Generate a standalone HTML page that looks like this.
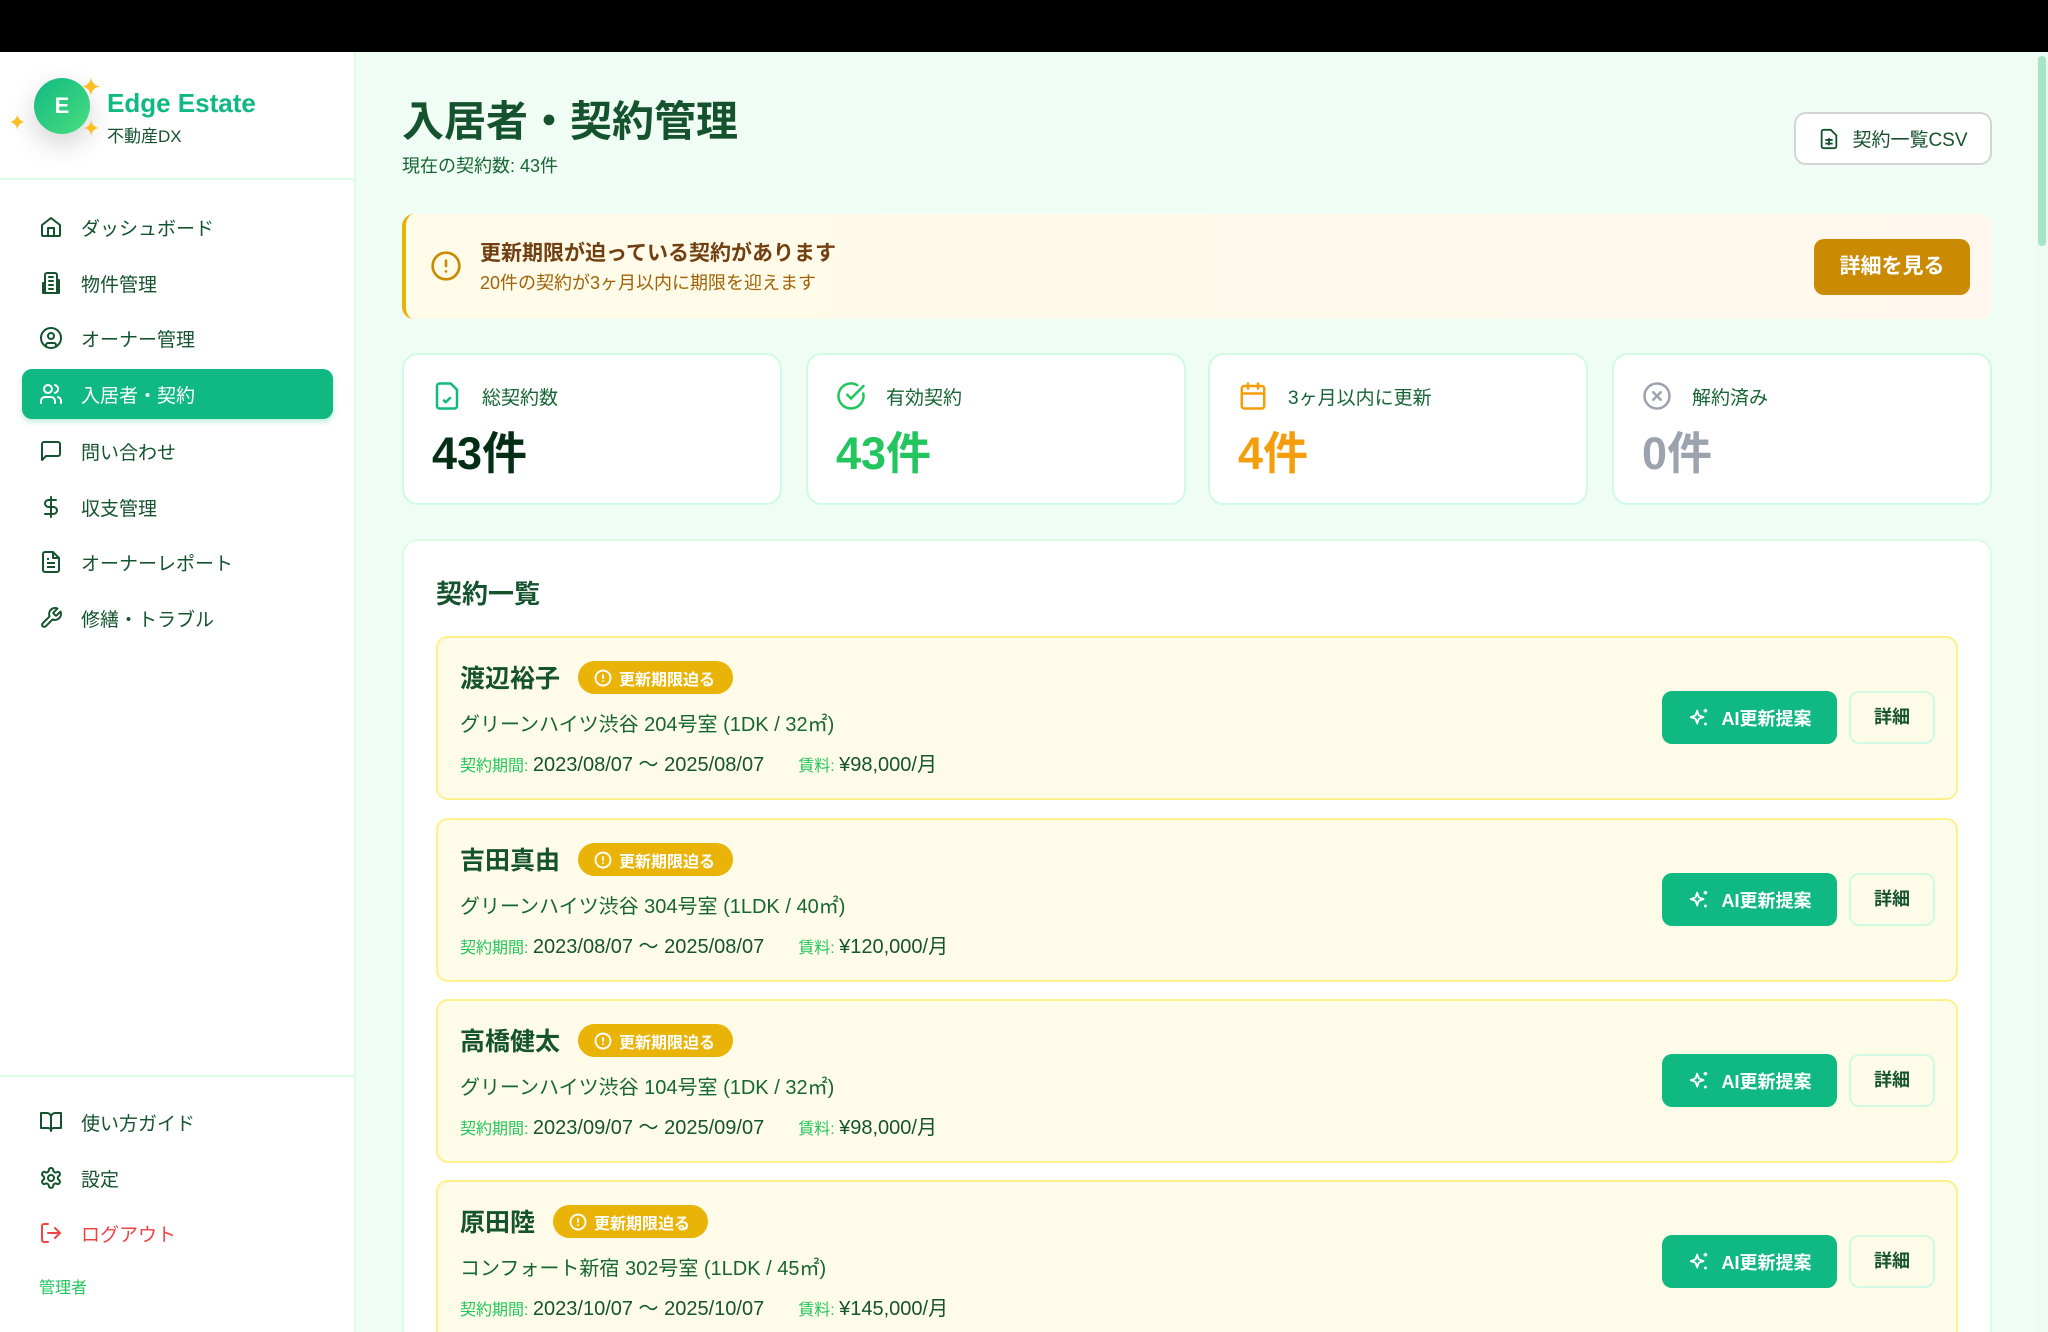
<!DOCTYPE html>
<html><head><meta charset="utf-8"><style>
*{box-sizing:border-box;margin:0;padding:0}
html{width:2048px;height:1332px;overflow:hidden}
body{width:2048px;height:1332px;overflow:hidden;background:#f0fdf4;font-family:"Liberation Sans","Noto Sans CJK JP",sans-serif;color:#14532d;position:relative}
.top{position:absolute;left:0;top:0;width:2048px;height:52px;background:#000}
.side{position:absolute;left:0;top:52px;width:356px;height:1280px;background:#fff;border-right:2px solid #dcfce7}
.logo{position:absolute;left:34px;top:26px;width:56px;height:56px;border-radius:50%;background:linear-gradient(135deg,#10b981,#4ade80);color:#fff;font-weight:bold;font-size:22px;text-align:center;line-height:56px;box-shadow:0 10px 28px rgba(0,0,0,.18)}
.brand{position:absolute;left:107px;top:36px;font-size:26px;font-weight:bold;color:#10b981}
.brand2{position:absolute;left:107px;top:70px;font-size:17px;color:#14532d}
.spark{position:absolute;color:#fbbf24}
.hr{position:absolute;left:0;width:354px;height:2px;background:#dcfce7}
.nav{position:absolute;left:22px;width:311px;height:50px;border-radius:10px;display:flex;align-items:center;padding-left:17px;font-size:19px;color:#14532d}
.nav svg{width:24px;height:24px;margin-right:18px;flex:none}
.nav.act{background:#10b981;color:#fff;box-shadow:0 3px 6px rgba(16,185,129,.25)}
.main{position:absolute;left:356px;top:52px;width:1680px;height:1280px;overflow:hidden}
h1{position:absolute;left:46px;top:36px;font-size:42px;font-weight:bold;color:#14532d}
.sub{position:absolute;left:46px;top:100px;font-size:18px;color:#166534}
.csv{position:absolute;left:1438px;top:60px;width:198px;height:53px;border:2px solid #d4d4d4;border-radius:12px;background:#fff;display:flex;align-items:center;justify-content:center;font-size:19px;color:#14532d}
.alert{position:absolute;left:46px;top:162px;width:1590px;height:105px;border-radius:12px;background:linear-gradient(90deg,#fefce8,#fff7ed);border-left:4px solid #eab308}
.alert .t{position:absolute;left:74px;top:23px;font-size:21px;font-weight:bold;color:#713f12}
.alert .s{position:absolute;left:74px;top:55px;font-size:18px;color:#a16207}
.alert .b{position:absolute;left:1408px;top:25px;width:156px;height:56px;border-radius:10px;background:#ca8a04;color:#fff;font-weight:bold;font-size:21px;text-align:center;line-height:56px}
.stat{position:absolute;top:301px;width:380px;height:152px;background:#fff;border:2px solid #d1fae5;border-radius:16px}
.stat .l{position:absolute;left:28px;top:26px;display:flex;align-items:center;font-size:19px;color:#166534}
.stat .l svg{width:30px;height:30px;margin-right:20px}
.stat .n{position:absolute;left:28px;top:62px;font-size:45px;font-weight:bold}
.list{position:absolute;left:46px;top:487px;width:1590px;height:820px;background:#fff;border:2px solid #dcfce7;border-radius:16px;overflow:hidden}
.list h2{position:absolute;left:32px;top:33px;font-size:26px;font-weight:bold;color:#14532d}
.item{position:absolute;left:32px;width:1522px;height:164px;background:#fefce8;border:2px solid #fef08a;border-radius:12px}
.item .nm{position:absolute;left:22px;top:21px;font-size:25px;font-weight:bold;color:#14532d}
.badge{position:absolute;top:23px;height:33px;border-radius:17px;background:#eab308;color:#fff;font-size:16px;font-weight:bold;display:flex;align-items:center;padding:0 18px 0 16px}
.badge svg{width:18px;height:18px;margin-right:7px}
.item .p{position:absolute;left:22px;top:70px;font-size:20px;color:#166534}
.item .d{position:absolute;left:22px;top:110px;font-size:20px;color:#14532d}
.item .d small{font-size:16px;color:#22c55e}
.ai{position:absolute;left:1224px;top:53px;width:175px;height:53px;border-radius:10px;background:#10b981;color:#fff;font-size:18px;font-weight:bold;display:flex;align-items:center;justify-content:center}
.ai svg{width:22px;height:22px;margin-right:12px}
.det{position:absolute;left:1411px;top:53px;width:86px;height:53px;border-radius:10px;border:2px solid #d1fae5;background:#fefce8;font-size:18px;font-weight:bold;text-align:center;line-height:49px;color:#14532d}
.sb{position:absolute;left:2036px;top:52px;width:12px;height:1280px;background:#eefbf3}
.sb i{position:absolute;left:2px;top:4px;width:8px;height:190px;border-radius:4px;background:#a7e3c7}
</style></head><body>
<div class="top"></div>
<div class="side">
 <div class="logo">E</div>
 <div class="spark" style="left:80px;top:20px;font-size:26px">✦</div>
 <div class="spark" style="left:8px;top:58px;font-size:22px">✦</div>
 <div class="spark" style="left:82px;top:64px;font-size:22px">✦</div>
 <div class="brand">Edge Estate</div>
 <div class="brand2">不動産DX</div>
 <div class="hr" style="top:126px"></div>
 <div class="nav" style="top:150px"><svg viewBox="0 0 24 24" fill="none" stroke="#14532d" stroke-width="2" stroke-linecap="round" stroke-linejoin="round"><path d="M3 10l9-7 9 7v10a1 1 0 0 1-1 1H4a1 1 0 0 1-1-1z"/><path d="M9 21v-8h6v8"/></svg>ダッシュボード</div>
 <div class="nav" style="top:206px"><svg viewBox="0 0 24 24" fill="none" stroke="#14532d" stroke-width="2" stroke-linecap="round" stroke-linejoin="round"><path d="M6 22V4a2 2 0 0 1 2-2h8a2 2 0 0 1 2 2v18z"/><path d="M6 12H4v10h2M18 9h2v13h-2M10 6h4M10 10h4M10 14h4M10 18h4"/></svg>物件管理</div>
 <div class="nav" style="top:261px"><svg viewBox="0 0 24 24" fill="none" stroke="#14532d" stroke-width="2" stroke-linecap="round"><circle cx="12" cy="12" r="10"/><circle cx="12" cy="10" r="3"/><path d="M7 20.7v-1.7a2 2 0 0 1 2-2h6a2 2 0 0 1 2 2v1.7"/></svg>オーナー管理</div>
 <div class="nav act" style="top:317px"><svg viewBox="0 0 24 24" fill="none" stroke="#fff" stroke-width="2" stroke-linecap="round"><path d="M16 21v-2a4 4 0 0 0-4-4H6a4 4 0 0 0-4 4v2"/><circle cx="9" cy="7" r="4"/><path d="M22 21v-2a4 4 0 0 0-3-3.9M16 3.1a4 4 0 0 1 0 7.8"/></svg>入居者・契約</div>
 <div class="nav" style="top:374px"><svg viewBox="0 0 24 24" fill="none" stroke="#14532d" stroke-width="2" stroke-linejoin="round"><path d="M21 15a2 2 0 0 1-2 2H7l-4 4V5a2 2 0 0 1 2-2h14a2 2 0 0 1 2 2z"/></svg>問い合わせ</div>
 <div class="nav" style="top:430px"><svg viewBox="0 0 24 24" fill="none" stroke="#14532d" stroke-width="2" stroke-linecap="round"><path d="M12 2v20M17 5H9.5a3.5 3.5 0 0 0 0 7h5a3.5 3.5 0 0 1 0 7H6"/></svg>収支管理</div>
 <div class="nav" style="top:485px"><svg viewBox="0 0 24 24" fill="none" stroke="#14532d" stroke-width="2" stroke-linejoin="round"><path d="M14 2H6a2 2 0 0 0-2 2v16a2 2 0 0 0 2 2h12a2 2 0 0 0 2-2V8z"/><path d="M14 2v6h6M8 13h8M8 17h8M8 9h2"/></svg>オーナーレポート</div>
 <div class="nav" style="top:541px"><svg viewBox="0 0 24 24" fill="none" stroke="#14532d" stroke-width="2" stroke-linejoin="round"><path d="M14.7 6.3a1 1 0 0 0 0 1.4l1.6 1.6a1 1 0 0 0 1.4 0l3.8-3.8a6 6 0 0 1-7.9 7.9l-6.9 6.9a2.1 2.1 0 0 1-3-3l6.9-6.9a6 6 0 0 1 7.9-7.900z"/></svg>修繕・トラブル</div>
 <div class="hr" style="top:1023px"></div>
 <div class="nav" style="top:1045px"><svg viewBox="0 0 24 24" fill="none" stroke="#14532d" stroke-width="2" stroke-linejoin="round"><path d="M2 3h6a4 4 0 0 1 4 4v14a3 3 0 0 0-3-3H2zM22 3h-6a4 4 0 0 0-4 4v14a3 3 0 0 1 3-3h7z"/></svg>使い方ガイド</div>
 <div class="nav" style="top:1101px"><svg viewBox="0 0 24 24" fill="none" stroke="#14532d" stroke-width="2"><circle cx="12" cy="12" r="3"/><path d="M12.2 2h-.4a2 2 0 0 0-2 2v.2a2 2 0 0 1-1 1.7l-.4.3a2 2 0 0 1-2 0l-.2-.1a2 2 0 0 0-2.7.7l-.2.4a2 2 0 0 0 .7 2.7l.2.1a2 2 0 0 1 1 1.7v.5a2 2 0 0 1-1 1.7l-.2.1a2 2 0 0 0-.7 2.7l.2.4a2 2 0 0 0 2.7.7l.2-.1a2 2 0 0 1 2 0l.4.3a2 2 0 0 1 1 1.7v.2a2 2 0 0 0 2 2h.4a2 2 0 0 0 2-2v-.2a2 2 0 0 1 1-1.7l.4-.3a2 2 0 0 1 2 0l.2.1a2 2 0 0 0 2.7-.7l.2-.4a2 2 0 0 0-.7-2.7l-.2-.1a2 2 0 0 1-1-1.7v-.5a2 2 0 0 1 1-1.7l.2-.1a2 2 0 0 0 .7-2.7l-.2-.4a2 2 0 0 0-2.7-.7l-.2.1a2 2 0 0 1-2 0l-.4-.3a2 2 0 0 1-1-1.7V4a2 2 0 0 0-2-2z"/></svg>設定</div>
 <div class="nav" style="top:1156px;color:#ef4444"><svg viewBox="0 0 24 24" fill="none" stroke="#ef4444" stroke-width="2" stroke-linecap="round"><path d="M9 21H5a2 2 0 0 1-2-2V5a2 2 0 0 1 2-2h4M16 17l5-5-5-5M21 12H9"/></svg>ログアウト</div>
 <div style="position:absolute;left:39px;top:1222px;font-size:16px;color:#22c55e">管理者</div>
</div>
<div class="main">
 <h1>入居者・契約管理</h1>
 <div class="sub">現在の契約数: 43件</div>
 <div class="csv"><svg width="22" height="22" viewBox="0 0 24 24" fill="none" stroke="#14532d" stroke-width="2" style="margin-right:12px"><path d="M14 2H6a2 2 0 0 0-2 2v16a2 2 0 0 0 2 2h12a2 2 0 0 0 2-2V8z"/><path d="M8 13h8M8 17h8M12 11v8"/></svg>契約一覧CSV</div>
 <div class="alert">
  <svg style="position:absolute;left:24px;top:36px" width="32" height="32" viewBox="0 0 24 24" fill="none" stroke="#ca8a04" stroke-width="2" stroke-linecap="round"><circle cx="12" cy="12" r="10"/><path d="M12 8v4M12 16h.01"/></svg>
  <div class="t">更新期限が迫っている契約があります</div>
  <div class="s">20件の契約が3ヶ月以内に期限を迎えます</div>
  <div class="b">詳細を見る</div>
 </div>
 <div class="stat" style="left:46px"><div class="l"><svg viewBox="0 0 24 24" fill="none" stroke="#10b981" stroke-width="2" stroke-linejoin="round"><path d="M15 2H6a2 2 0 0 0-2 2v16a2 2 0 0 0 2 2h12a2 2 0 0 0 2-2V7z"/><path d="M9 15l2 2 4-4"/></svg>総契約数</div><div class="n" style="color:#052e16">43件</div></div>
 <div class="stat" style="left:450px"><div class="l"><svg viewBox="0 0 24 24" fill="none" stroke="#22c55e" stroke-width="2" stroke-linecap="round"><path d="M21.8 10A10 10 0 1 1 17 3.3"/><path d="M9 11l3 3L22 4"/></svg>有効契約</div><div class="n" style="color:#22c55e">43件</div></div>
 <div class="stat" style="left:852px"><div class="l"><svg viewBox="0 0 24 24" fill="none" stroke="#f59e0b" stroke-width="2" stroke-linecap="round"><rect x="3" y="4" width="18" height="18" rx="2"/><path d="M8 2v4M16 2v4M3 10h18"/></svg>3ヶ月以内に更新</div><div class="n" style="color:#f59e0b">4件</div></div>
 <div class="stat" style="left:1256px"><div class="l"><svg viewBox="0 0 24 24" fill="none" stroke="#9ca3af" stroke-width="2" stroke-linecap="round"><circle cx="12" cy="12" r="10"/><path d="M15 9l-6 6M9 9l6 6"/></svg>解約済み</div><div class="n" style="color:#9ca3af">0件</div></div>
 <div class="list">
  <h2>契約一覧</h2>
  <div class="item" style="top:95px"><div class="nm">渡辺裕子</div><div class="badge" style="left:140px"><svg viewBox="0 0 24 24" fill="none" stroke="#fff" stroke-width="2.5" stroke-linecap="round"><circle cx="12" cy="12" r="10"/><path d="M12 8v4M12 16h.01"/></svg>更新期限迫る</div><div class="p">グリーンハイツ渋谷 204号室 (1DK / 32㎡)</div><div class="d"><small>契約期間: </small>2023/08/07 〜 2025/08/07<small style="margin-left:34px">賃料: </small>¥98,000/月</div><div class="ai"><svg viewBox="0 0 24 24" fill="none" stroke="#fff" stroke-width="2" stroke-linejoin="round"><path d="M10 4l1.8 5.2L17 11l-5.2 1.8L10 18l-1.8-5.2L3 11l5.2-1.8z"/><path d="M19 2v4M17 4h4M19 17v3M17.5 18.5h3"/></svg>AI更新提案</div><div class="det">詳細</div></div>
  <div class="item" style="top:277px"><div class="nm">吉田真由</div><div class="badge" style="left:140px"><svg viewBox="0 0 24 24" fill="none" stroke="#fff" stroke-width="2.5" stroke-linecap="round"><circle cx="12" cy="12" r="10"/><path d="M12 8v4M12 16h.01"/></svg>更新期限迫る</div><div class="p">グリーンハイツ渋谷 304号室 (1LDK / 40㎡)</div><div class="d"><small>契約期間: </small>2023/08/07 〜 2025/08/07<small style="margin-left:34px">賃料: </small>¥120,000/月</div><div class="ai"><svg viewBox="0 0 24 24" fill="none" stroke="#fff" stroke-width="2" stroke-linejoin="round"><path d="M10 4l1.8 5.2L17 11l-5.2 1.8L10 18l-1.8-5.2L3 11l5.2-1.8z"/><path d="M19 2v4M17 4h4M19 17v3M17.5 18.5h3"/></svg>AI更新提案</div><div class="det">詳細</div></div>
  <div class="item" style="top:458px"><div class="nm">高橋健太</div><div class="badge" style="left:140px"><svg viewBox="0 0 24 24" fill="none" stroke="#fff" stroke-width="2.5" stroke-linecap="round"><circle cx="12" cy="12" r="10"/><path d="M12 8v4M12 16h.01"/></svg>更新期限迫る</div><div class="p">グリーンハイツ渋谷 104号室 (1DK / 32㎡)</div><div class="d"><small>契約期間: </small>2023/09/07 〜 2025/09/07<small style="margin-left:34px">賃料: </small>¥98,000/月</div><div class="ai"><svg viewBox="0 0 24 24" fill="none" stroke="#fff" stroke-width="2" stroke-linejoin="round"><path d="M10 4l1.8 5.2L17 11l-5.2 1.8L10 18l-1.8-5.2L3 11l5.2-1.8z"/><path d="M19 2v4M17 4h4M19 17v3M17.5 18.5h3"/></svg>AI更新提案</div><div class="det">詳細</div></div>
  <div class="item" style="top:639px;height:200px"><div class="nm">原田陸</div><div class="badge" style="left:115px"><svg viewBox="0 0 24 24" fill="none" stroke="#fff" stroke-width="2.5" stroke-linecap="round"><circle cx="12" cy="12" r="10"/><path d="M12 8v4M12 16h.01"/></svg>更新期限迫る</div><div class="p">コンフォート新宿 302号室 (1LDK / 45㎡)</div><div class="d"><small>契約期間: </small>2023/10/07 〜 2025/10/07<small style="margin-left:34px">賃料: </small>¥145,000/月</div><div class="ai"><svg viewBox="0 0 24 24" fill="none" stroke="#fff" stroke-width="2" stroke-linejoin="round"><path d="M10 4l1.8 5.2L17 11l-5.2 1.8L10 18l-1.8-5.2L3 11l5.2-1.8z"/><path d="M19 2v4M17 4h4M19 17v3M17.5 18.5h3"/></svg>AI更新提案</div><div class="det">詳細</div></div>
 </div>
</div>
<div class="sb"><i></i></div>
</body></html>
